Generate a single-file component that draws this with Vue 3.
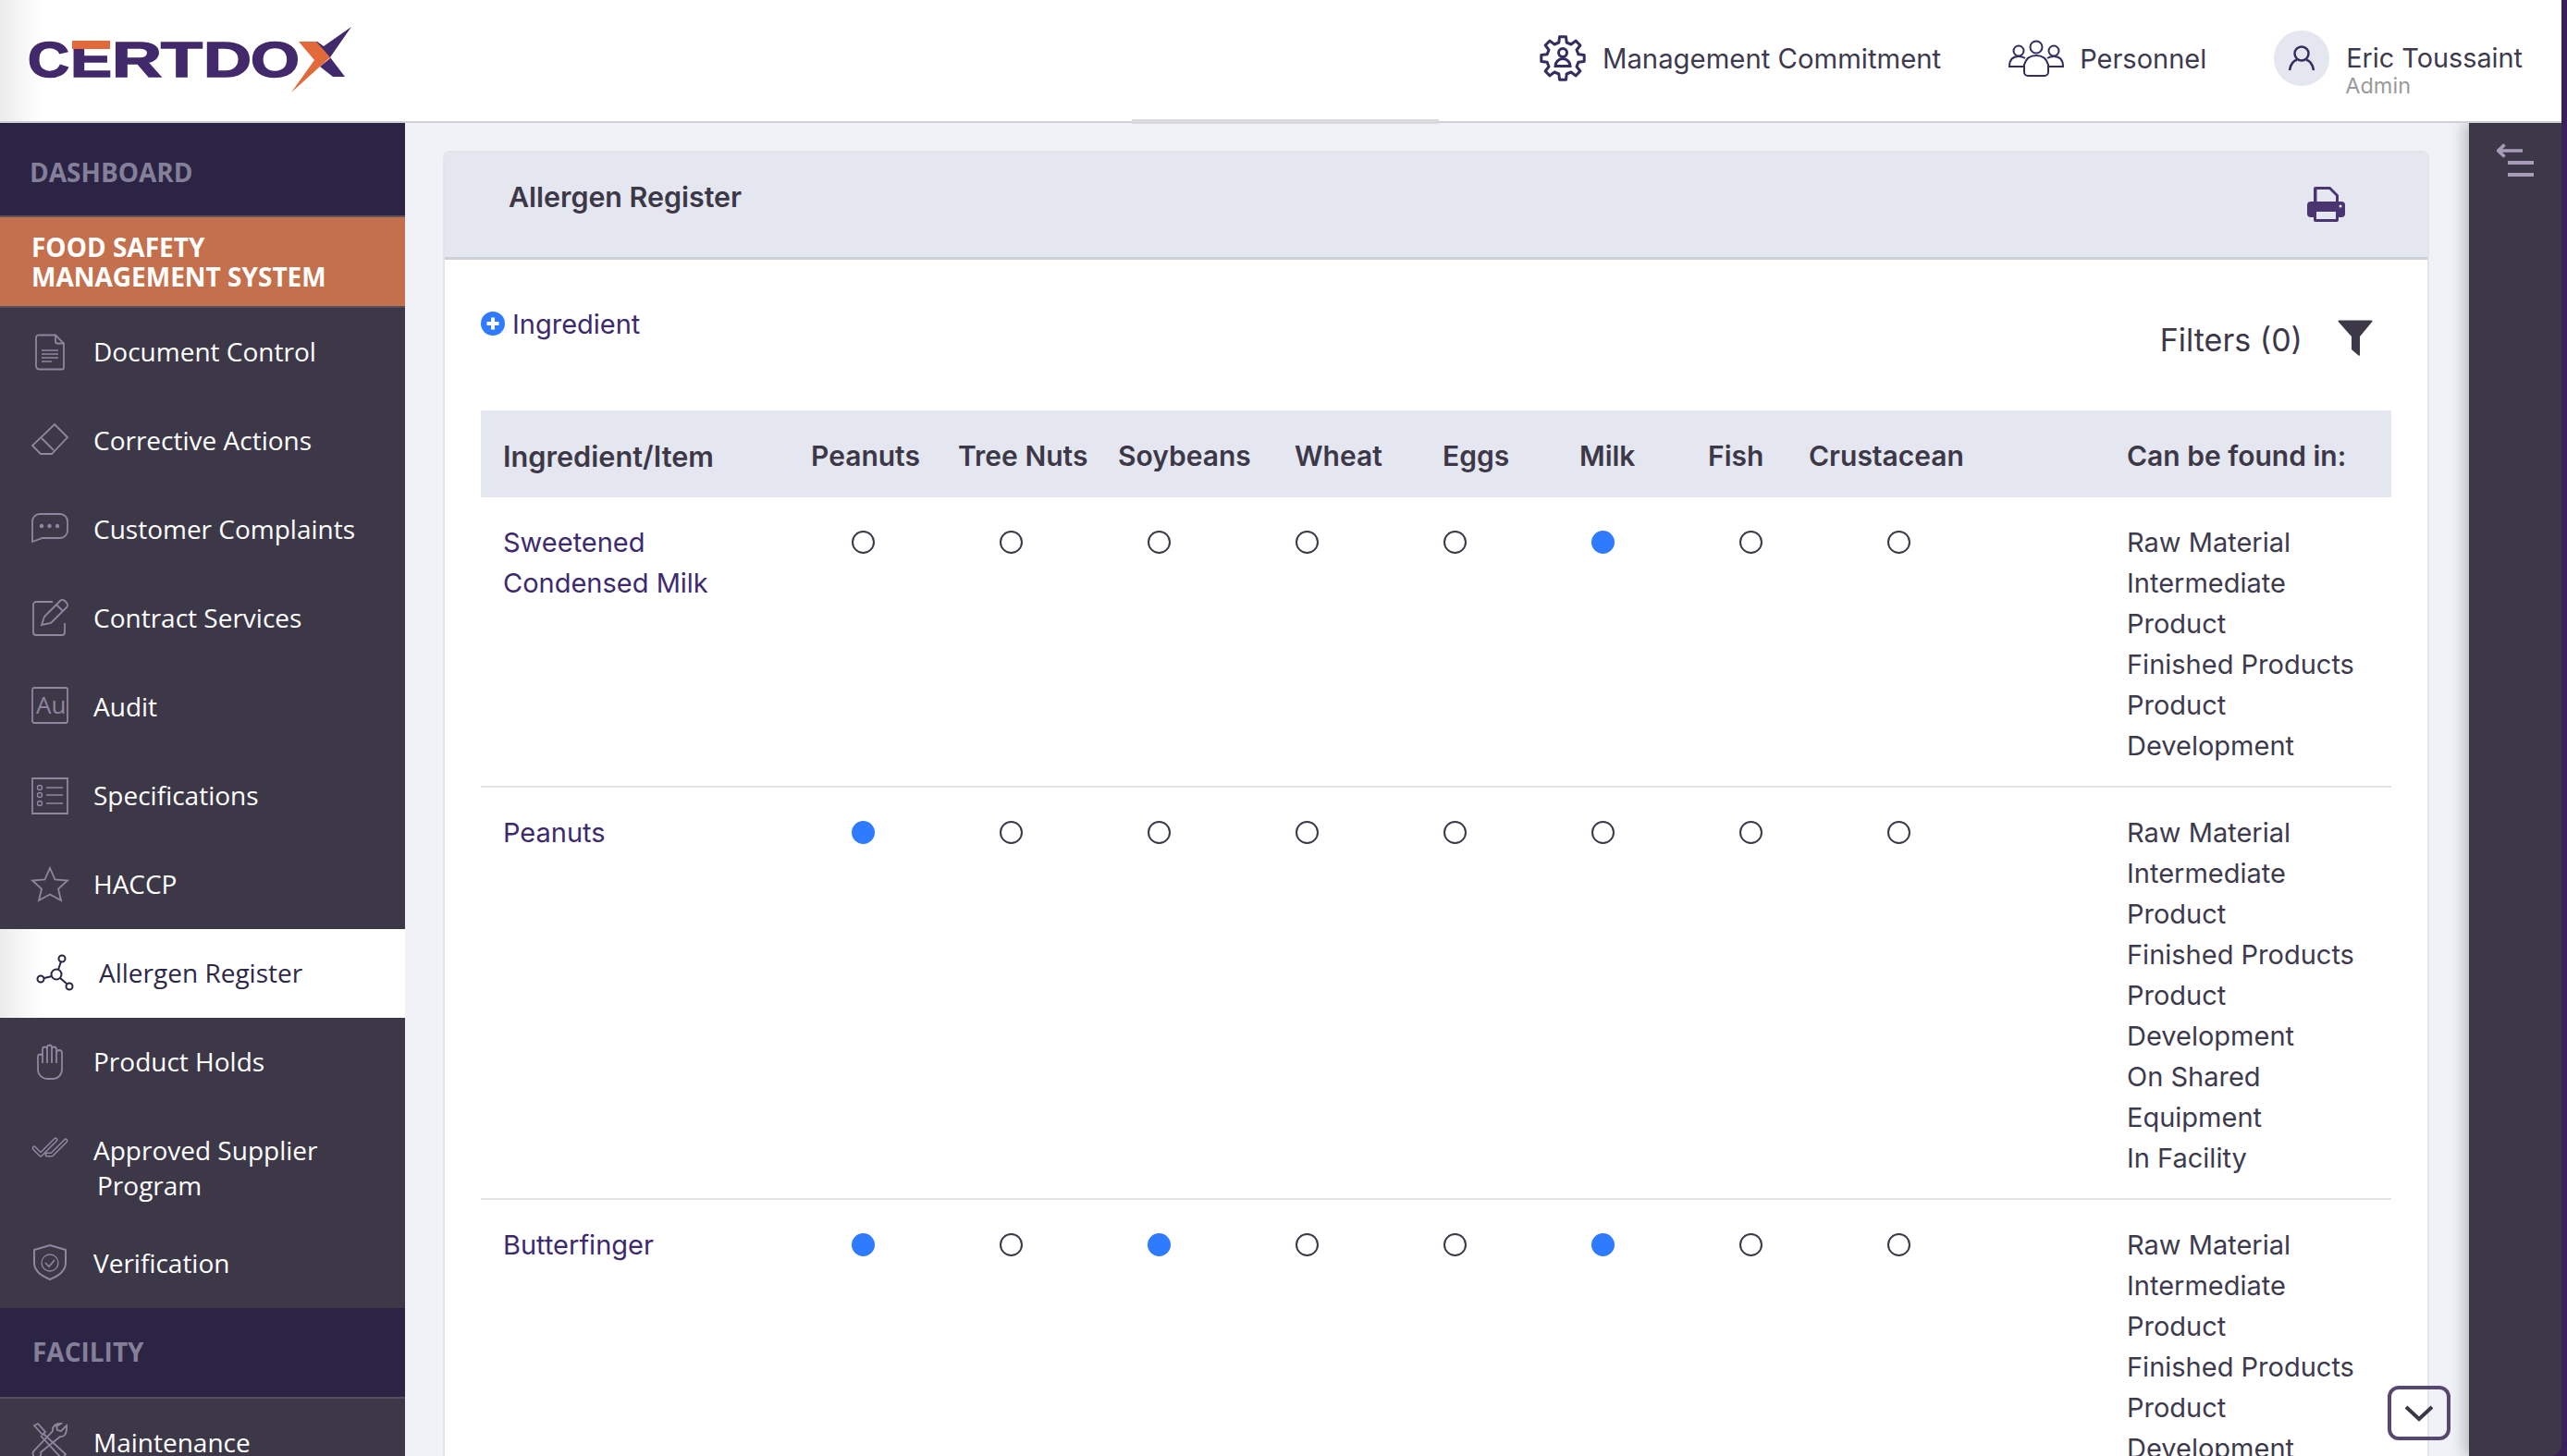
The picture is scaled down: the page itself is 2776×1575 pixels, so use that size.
<script setup>
const gear = (() => {
  const pts = []
  const n = 8
  for (let i = 0; i < n; i++) {
    const a = (i / n) * Math.PI * 2 - Math.PI / 2
    const s = Math.PI / n
    const at = (r, t) => `${(25 + r * Math.cos(t)).toFixed(1)},${(25 + r * Math.sin(t)).toFixed(1)}`
    pts.push(at(23.5, a - s * 0.38), at(23.5, a + s * 0.38), at(17.5, a + s * 0.62), at(17.5, a + s * 1.38))
  }
  return pts.join(' ')
})()

const logoLetters = [
  { c: 'C', x: 0, w: 45 },
  { c: 'E', x: 46, w: 45 },
  { c: 'R', x: 91, w: 54 },
  { c: 'T', x: 144, w: 45 },
  { c: 'D', x: 190, w: 52 },
  { c: 'O', x: 241, w: 53 },
]

const menu = [
  { label: 'Document Control', icon: '<path d="M9 1.5h17l9 9v26a2 2 0 0 1-2 2H9a4 4 0 0 1-4-3V4a3 3 0 0 1 4-2.500z"/><path d="M26 1.500v7a2 2 0 0 0 2 2h7"/><path d="M11 18h18M11 22h18M11 26h18M11 30h11" stroke-width="1.300"/>' },
  { label: 'Corrective Actions', icon: '<path d="M25 2l14 14-17 18H10L1 25z"/><path d="M11 17l13 13"/>' },
  { label: 'Customer Complaints', icon: '<path d="M1 33V11a8 8 0 0 1 8-8h22a8 8 0 0 1 8 8v10a8 8 0 0 1-8 8H12z"/><circle cx="11" cy="16" r="1.300" fill="#8f869f"/><circle cx="19.500" cy="16" r="1.300" fill="#8f869f"/><circle cx="28" cy="16" r="1.300" fill="#8f869f"/>' },
  { label: 'Contract Services', icon: '<path d="M23 2H5a3 3 0 0 0-3 3v30a3 3 0 0 0 3 3h28a3 3 0 0 0 3-3V25"/><path d="M11 27l3-9L31 1a3.500 3.500 0 0 1 5 0l2 2a3.500 3.500 0 0 1 0 5L21 25z"/><path d="M27 5l7 7"/>' },
  { label: 'Audit', icon: '<rect x="1" y="-1" width="38" height="38" rx="2"/><text x="5" y="27" font-size="26" font-family="Open Sans, sans-serif" fill="#8f869f" stroke="none">Au</text>' },
  { label: 'Specifications', icon: '<path d="M39 39H1V1h38z"/><circle cx="9" cy="11" r="2.500" stroke-width="1.400"/><circle cx="9" cy="19" r="2.500" stroke-width="1.400"/><circle cx="9" cy="28" r="2.500" stroke-width="1.400"/><path d="M16 11h18M16 19h18M16 28h18" stroke-width="1.400"/>' },
  { label: 'HACCP', icon: '<polygon points="20,2 25.500,14.500 39,15.500 29,24.500 32,37 20,30.500 8,37 11,24.500 1,15.500 14.500,14.500"/>' },
]
const menu2 = [
  { label: 'Product Holds', icon: '<path d="M7 29V14a2.500 2.500 0 0 1 5 0v7M12 14V6a2.500 2.500 0 0 1 5 0v15M17 6V4a2.500 2.500 0 0 1 5 0v17M22 6a2.500 2.500 0 0 1 5 0v15M27 10a3 3 0 0 1 6 0v18a10 10 0 0 1-10 10h-6a10 10 0 0 1-10-9"/>' },
]
const menu3 = [
  { label: 'Verification', icon: '<path d="M20 0l17 5v14c0 8-7 14-17 18C10 33 3 27 3 19V5z" stroke-width="2"/><circle cx="20" cy="19" r="9" stroke-width="1.300"/><path d="M15 19l4 4 6-7" stroke-width="1.600"/>' },
]

const cols = ['Peanuts', 'Tree Nuts', 'Soybeans', 'Wheat', 'Eggs', 'Milk', 'Fish', 'Crustacean']
const base = ['Raw Material', 'Intermediate', 'Product', 'Finished Products', 'Product', 'Development']
const rows = [
  { name: ['Sweetened', 'Condensed Milk'], on: [5], found: base },
  { name: ['Peanuts'], on: [0], found: [...base, 'On Shared', 'Equipment', 'In Facility'] },
  { name: ['Butterfinger'], on: [0, 2, 5], found: base },
]
</script>

<template>
  <div class="page">
    <header class="top">
      <svg class="logo" width="352" height="72" viewBox="0 0 352 72" role="img" aria-label="Certdox">
        <text v-for="l in logoLetters" :key="l.c" :x="l.x" y="54" class="logo-text" :textLength="l.w" lengthAdjust="spacingAndGlyphs">{{ l.c }}</text>
        <rect x="48" y="15" width="41" height="9" fill="#e2693a" />
        <polygon points="350,0 320,21 313,16 300,16 327,34 316,43 330,54 343,54 327,33" fill="#41296b" />
        <polygon points="293,16 312,16 327,33 285,71 310,36" fill="#e2693a" />
      </svg>
      <div class="top-right">
        <div class="top-item gap18">
          <svg width="50" height="50" viewBox="0 0 50 50" fill="none" stroke="#352c60" stroke-width="3">
            <polygon :points="gear" stroke-linejoin="round" />
            <circle cx="25" cy="19" r="4.500" />
            <path d="M17 33.500a8 8 0 0 1 16 0z" />
          </svg>
          <span class="mgmt">Management Commitment</span>
        </div>
        <div class="top-item gap17 person">
          <svg width="60" height="40" viewBox="0 0 60 40" fill="none" stroke="#352c60" stroke-width="2">
            <circle cx="30" cy="8" r="6.500" />
            <circle cx="11" cy="12" r="5.500" />
            <circle cx="49" cy="12" r="5.500" />
            <path d="M17 27c2-7 6-10 13-10s11 3 13 10v8a4 4 0 0 1-4 4H21a4 4 0 0 1-4-4z" />
            <path d="M17 29H1c0-7 3-11 10-11 3 0 5 .7 7 2M43 29h16c0-7-3-11-10-11-3 0-5 .7-7 2" />
          </svg>
          <span>Personnel</span>
        </div>
        <div class="top-item gap18 user">
          <div class="avatar">
            <svg width="30" height="28" viewBox="0 0 30 28" fill="none" stroke="#352c60" stroke-width="2.500">
              <circle cx="15" cy="9" r="7.500" />
              <path d="M2 27c1-7 5-11 8-11M28 27c-1-7-5-11-8-11" />
            </svg>
          </div>
          <div class="who">
            <div class="who-name">Eric Toussaint</div>
            <div class="who-role">Admin</div>
          </div>
        </div>
      </div>
      <div class="top-seam"></div>
    </header>

    <div class="body">
      <nav class="side">
        <div class="sec sec-dash">DASHBOARD</div>
        <div class="sec-active">FOOD SAFETY<br />MANAGEMENT SYSTEM</div>
        <div v-for="m in menu" :key="m.label" class="item">
          <svg class="ic" width="40" height="40" viewBox="0 0 40 40" v-html="m.icon"></svg>
          <span>{{ m.label }}</span>
        </div>
        <div class="item item-on">
          <svg class="ic-on" width="40" height="40" viewBox="0 0 40 40" fill="none" stroke="#2c2444" stroke-width="2">
            <circle cx="27" cy="4" r="3.500" />
            <circle cx="21" cy="21" r="5.500" />
            <circle cx="4" cy="26" r="3.500" />
            <circle cx="35" cy="34" r="3.500" />
            <path d="M26 7l-3 9M16 23l-8 2M25 25l7 6" />
          </svg>
          <span>Allergen Register</span>
        </div>
        <div v-for="m in menu2" :key="m.label" class="item">
          <svg class="ic" width="40" height="40" viewBox="0 0 40 40" v-html="m.icon"></svg>
          <span>{{ m.label }}</span>
        </div>
        <div class="item item-two">
          <svg class="ic" width="40" height="40" viewBox="0 0 40 40" stroke-linecap="round" stroke-linejoin="round">
            <path d="M3 24l7 7 9-9M17 31l5 0 15-15M19 22l7-7" stroke-width="5" />
            <path d="M3 24l7 7 9-9M17 31l5 0 15-15M19 22l7-7" stroke="#3d3848" stroke-width="1.800" />
          </svg>
          <span>Approved Supplier<em>Program</em></span>
        </div>
        <div v-for="m in menu3" :key="m.label" class="item">
          <svg class="ic" width="40" height="40" viewBox="0 0 40 40" v-html="m.icon"></svg>
          <span>{{ m.label }}</span>
        </div>
        <div class="sec sec-fac">FACILITY</div>
        <div class="item item-cut">
          <svg class="ic" width="40" height="40" viewBox="0 0 40 40">
            <path d="M3 3l4-2 8 9-3 3zM13 12l24 22-4 5-23-25" />
            <path d="M38 3l-6 6-4-1-1-4 5-3c-5-1-10 3-9 8L3 30c-3 3-1 8 3 8 3 0 5-3 4-6l21-17c4 1 8-3 7-12z" />
          </svg>
          <span>Maintenance</span>
        </div>
      </nav>

      <main class="main">
        <section class="card">
          <div class="card-head">
            <h1>Allergen Register</h1>
            <svg width="41" height="38" viewBox="0 0 41 38">
              <path d="M9 0h16l9 9v10H7V2a2 2 0 0 1 2-2z" fill="#4b3570" />
              <path d="M10.500 3H24l7 7v9H10.500z" fill="#e4e7f0" />
              <rect x="0" y="16" width="41" height="17" rx="4" fill="#4b3570" />
              <rect x="7" y="24" width="27" height="14" rx="2" fill="#4b3570" />
              <rect x="10" y="27" width="21" height="8" fill="#e4e7f0" />
              <circle cx="36" cy="21" r="1.500" fill="#e4e7f0" />
            </svg>
          </div>
          <div class="card-body">
            <div class="tools">
              <div class="add">
                <svg width="26" height="26" viewBox="0 0 26 26">
                  <circle cx="13" cy="13" r="13" fill="#2e7bff" />
                  <path d="M13 6.500v13M6.500 13h13" stroke="#fff" stroke-width="4" />
                </svg>
                <span>Ingredient</span>
              </div>
              <div class="filters">
                <span>Filters (0)</span>
                <svg width="38" height="39" viewBox="0 0 38 39">
                  <path d="M1.500 0.500h35a1 1 0 0 1 .8 1.600L24 18v20a1 1 0 0 1-1.500.6l-7-6a1 1 0 0 1-.5-.8V18L.7 2.100a1 1 0 0 1 .8-1.600z" fill="#3d3848" />
                </svg>
              </div>
            </div>

            <div class="thead">
              <div class="th-first">Ingredient/Item</div>
              <div v-for="c in cols" :key="c">{{ c }}</div>
              <div>Can be found in:</div>
            </div>

            <div v-for="(r, ri) in rows" :key="ri" class="trow">
              <div class="cell-name">
                <div v-for="n in r.name" :key="n">{{ n }}</div>
              </div>
              <div v-for="(c, ci) in cols" :key="c" class="cell-dot">
                <span class="dot" :class="{ 'dot-on': r.on.includes(ci) }"></span>
              </div>
              <div class="cell-spacer"></div>
              <div class="cell-found">
                <div v-for="(f, fi) in r.found" :key="fi">{{ f }}</div>
              </div>
            </div>
          </div>
        </section>
      </main>

      <aside class="rail">
        <svg width="40" height="40" viewBox="0 0 40 40" fill="none" stroke="#a89cb8">
          <path d="M28 8H1.500M8.500 1.500L1.500 8l7 6.500" stroke-width="3.500" />
          <path d="M12 21h28M12 34h28" stroke-width="4" />
        </svg>
      </aside>
    </div>

    <div class="scroll-btn">
      <svg width="32" height="20" viewBox="0 0 32 20" fill="none" stroke="#3d3848" stroke-width="4">
        <path d="M2 3l14 13L30 3" />
      </svg>
    </div>
  </div>
</template>

<style>
html, body { margin: 0; background: #3a2058; }
</style>

<style scoped>
.page {
  position: relative;
  width: 2776px;
  height: 1575px;
  overflow: hidden;
  background: #3a2058;
  font-family: Inter, "Liberation Sans", sans-serif;
  color: #3d3a4e;
}
.top {
  position: relative;
  box-sizing: border-box;
  width: 2770px;
  height: 133px;
  display: flex;
  align-items: center;
  justify-content: space-between;
  padding: 0 42px 5px 30px;
  background: linear-gradient(90deg, #ececec, #fff 45px);
  border-bottom: 2px solid #d0d0d6;
}
.logo { margin-top: 3px; overflow: visible; }
.logo-text {
  font-family: "Liberation Sans", sans-serif;
  font-weight: 700;
  font-size: 53px;
  fill: #41296b;
  stroke: #41296b;
  stroke-width: 1.500px;
}
.top-right { display: flex; align-items: center; font-size: 29px; }
.top-item { display: flex; align-items: center; }
.gap18 { gap: 18px; }
.gap17 { gap: 17px; }
.mgmt { font-size: 29.300px; }
.person { margin-left: 73px; }
.avatar {
  width: 60px;
  height: 60px;
  border-radius: 50%;
  background: #e4e7f0;
  display: flex;
  align-items: center;
  justify-content: center;
}
.user { height: 60px; margin-left: 73px; }
.who { height: 60px; margin-top: 24px; }
.who-name { font-size: 28.800px; line-height: 36px; white-space: nowrap; }
.who-role { font-size: 23.500px; line-height: 24px; color: #9a9a9a; margin-left: -1px; }
.top-seam {
  position: absolute;
  left: 1224px;
  width: 332px;
  bottom: -3px;
  height: 5px;
  background: #dadade;
}
.body { display: flex; width: 2770px; height: 1442px; border-bottom-right-radius: 12px; overflow: hidden; }
.side {
  width: 438px;
  flex: none;
  background: #3d3848;
  color: #fff;
  font-family: "Open Sans", sans-serif;
  font-size: 28px;
}
.sec {
  background: #2c2444;
  color: #85809a;
  font-weight: 700;
  display: flex;
  align-items: center;
  box-sizing: border-box;
}
.sec-dash { height: 100px; padding: 6px 0 0 32px; }
.sec-fac { height: 98px; padding: 0 0 2px 35px; border-bottom: 2px solid #55505f; }
.sec-active {
  box-sizing: border-box;
  height: 100px;
  background: #c4704d;
  border-top: 2px solid #5e5560;
  border-bottom: 2px solid #55505f;
  padding: 16px 0 0 34px;
  font-weight: 700;
  line-height: 32px;
}
.item {
  height: 96px;
  box-sizing: border-box;
  display: flex;
  align-items: center;
  padding-left: 34px;
  gap: 27px;
  line-height: 38px;
}
.item > span { margin-bottom: 2px; }
.ic { flex: none; fill: none; stroke: #8f869f; stroke-width: 1.800; overflow: visible; }
.item-on {
  background: linear-gradient(90deg, #ececec, #fff 45px);
  color: #2c2848;
  padding-left: 40px;
}
.ic-on { flex: none; overflow: visible; }
.item-two { height: 122px; align-items: flex-start; padding-top: 28px; }
.item-two > span { margin-bottom: 0; }
.item-two .ic { margin-top: -7px; }
.item-two em { display: block; font-style: normal; margin-left: 4px; }
.item-cut .ic { margin-top: -4px; }
.main {
  flex: 1;
  background: #f0f2f7;
  padding: 30px 0 0 41px;
  overflow: hidden;
  min-width: 0;
}
.card {
  box-sizing: border-box;
  width: 2148px;
  background: #fff;
  border: 2px solid #e3e4e8;
  border-bottom: 0;
  border-radius: 8px 8px 0 0;
  font-size: 29px;
}
.card-head {
  box-sizing: border-box;
  height: 116px;
  background: #e4e7f0;
  border-bottom: 3px solid #ccd0d9;
  display: flex;
  justify-content: space-between;
  padding: 0 89px 0 69px;
  border-radius: 6px 6px 0 0;
}
.card-head h1 {
  margin: 30px 0 0;
  font-size: 30.400px;
  line-height: 36px;
  font-weight: 600;
  color: #3d3848;
}
.card-head svg { margin-top: 37px; }
.card-body { padding: 0 39px; }
.tools { display: flex; justify-content: space-between; height: 163px; }
.add { display: flex; align-items: center; gap: 8px; height: 44px; margin-top: 47px; color: #3d2a6c; }
.filters {
  display: flex;
  align-items: flex-start;
  gap: 38px;
  padding-right: 20px;
  margin-top: 65px;
  font-size: 34px;
  line-height: 44px;
  color: #3d3848;
}
.thead {
  display: grid;
  grid-template-columns: 357px 159px 173px 191px 160px 148px 139px 109px 344px 286px;
  height: 94px;
  align-items: center;
  background: #e4e7f0;
  font-size: 30px;
  font-weight: 600;
  color: #3d3848;
  white-space: nowrap;
}
.thead > div { padding-top: 4px; }
.th-first { padding-left: 24px; font-size: 30.700px; }
.trow {
  display: grid;
  grid-template-columns: 333px repeat(8, 160px) 167px 286px;
  padding: 27px 0 21px;
  border-bottom: 2px solid #e3e4e8;
  line-height: 44px;
}
.cell-name { padding-left: 24px; color: #3d2a6c; }
.cell-dot { display: flex; justify-content: center; padding-top: 9px; align-items: flex-start; }
.dot {
  box-sizing: border-box;
  width: 25px;
  height: 25px;
  border-radius: 50%;
  border: 2px solid #3d3848;
  background: #fff;
}
.dot-on { border: 0; background: #2e7bff; }
.cell-found { white-space: nowrap; }
.rail {
  width: 100px;
  flex: none;
  box-sizing: border-box;
  padding: 22px 0 0 30px;
  background: #3d3848;
  box-shadow: -6px 0 14px rgba(0, 0, 0, 0.22);
  z-index: 1;
}
.scroll-btn {
  position: absolute;
  left: 2582px;
  top: 1499px;
  box-sizing: border-box;
  width: 68px;
  height: 59px;
  border: 4px solid #574870;
  border-radius: 12px;
  display: flex;
  align-items: center;
  justify-content: center;
  z-index: 2;
}
</style>
